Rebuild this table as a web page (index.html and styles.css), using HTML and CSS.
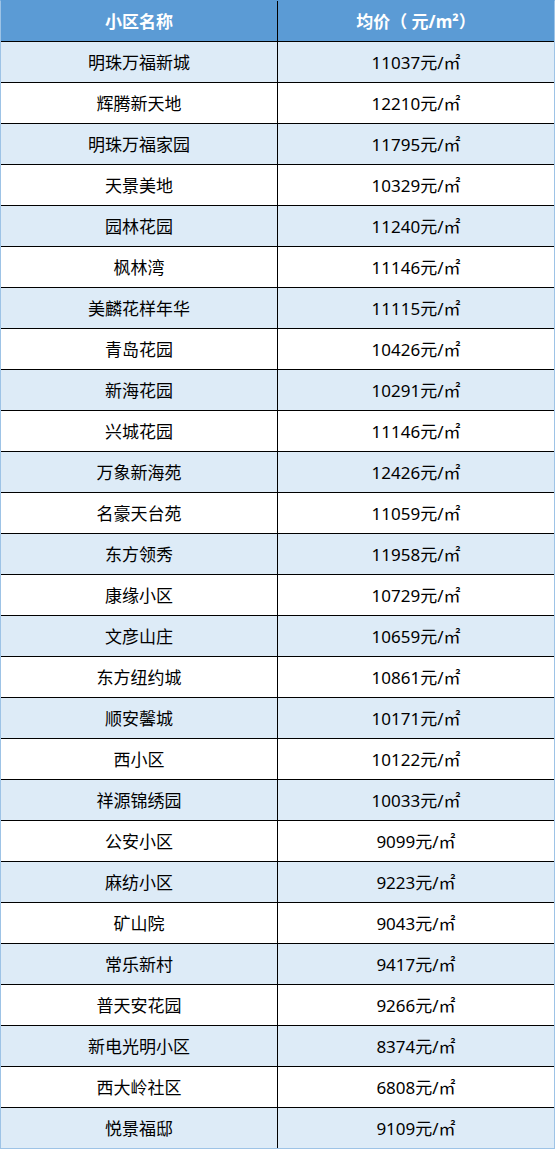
FILE: index.html
```html
<!DOCTYPE html>
<html lang="zh-CN">
<head>
<meta charset="utf-8">
<title>小区均价</title>
<link rel="stylesheet" href="styles.css">
</head>
<body>
<div class="price-table">
  <div class="cell head">小区名称</div><div class="cell head">均价<span class="paren">（</span>元/m²）</div>
  <div class="cell odd">明珠万福新城</div><div class="cell odd">11037元/㎡</div>
  <div class="cell">辉腾新天地</div><div class="cell">12210元/㎡</div>
  <div class="cell odd">明珠万福家园</div><div class="cell odd">11795元/㎡</div>
  <div class="cell">天景美地</div><div class="cell">10329元/㎡</div>
  <div class="cell odd">园林花园</div><div class="cell odd">11240元/㎡</div>
  <div class="cell">枫林湾</div><div class="cell">11146元/㎡</div>
  <div class="cell odd">美麟花样年华</div><div class="cell odd">11115元/㎡</div>
  <div class="cell">青岛花园</div><div class="cell">10426元/㎡</div>
  <div class="cell odd">新海花园</div><div class="cell odd">10291元/㎡</div>
  <div class="cell">兴城花园</div><div class="cell">11146元/㎡</div>
  <div class="cell odd">万象新海苑</div><div class="cell odd">12426元/㎡</div>
  <div class="cell">名豪天台苑</div><div class="cell">11059元/㎡</div>
  <div class="cell odd">东方领秀</div><div class="cell odd">11958元/㎡</div>
  <div class="cell">康缘小区</div><div class="cell">10729元/㎡</div>
  <div class="cell odd">文彦山庄</div><div class="cell odd">10659元/㎡</div>
  <div class="cell">东方纽约城</div><div class="cell">10861元/㎡</div>
  <div class="cell odd">顺安馨城</div><div class="cell odd">10171元/㎡</div>
  <div class="cell">西小区</div><div class="cell">10122元/㎡</div>
  <div class="cell odd">祥源锦绣园</div><div class="cell odd">10033元/㎡</div>
  <div class="cell">公安小区</div><div class="cell">9099元/㎡</div>
  <div class="cell odd">麻纺小区</div><div class="cell odd">9223元/㎡</div>
  <div class="cell">矿山院</div><div class="cell">9043元/㎡</div>
  <div class="cell odd">常乐新村</div><div class="cell odd">9417元/㎡</div>
  <div class="cell">普天安花园</div><div class="cell">9266元/㎡</div>
  <div class="cell odd">新电光明小区</div><div class="cell odd">8374元/㎡</div>
  <div class="cell">西大岭社区</div><div class="cell">6808元/㎡</div>
  <div class="cell odd">悦景福邸</div><div class="cell odd">9109元/㎡</div>
</div>
</body>
</html>
```

FILE: styles.css
```css
html, body {
  margin: 0;
  padding: 0;
  background: #ffffff;
}

.price-table {
  box-sizing: border-box;
  width: 555px;
  border: 1px solid #9dc3e6;
  border-top-color: #5b9bd5;
  background: #000000;
  display: grid;
  grid-template-columns: 276px 276px;
  grid-auto-rows: 40px;
  gap: 1px;
  font-family: "Noto Sans", "Noto Sans CJK SC", sans-serif;
}

.cell {
  display: flex;
  align-items: center;
  justify-content: center;
  background: #ffffff;
  color: #000000;
  font-size: 17px;
  line-height: 1;
}

.cell.odd {
  background: #ddebf7;
}

.cell.head {
  background: #5b9bd5;
  color: #ffffff;
  font-weight: 700;
}

.paren {
  margin-right: 0.25em;
}
```
